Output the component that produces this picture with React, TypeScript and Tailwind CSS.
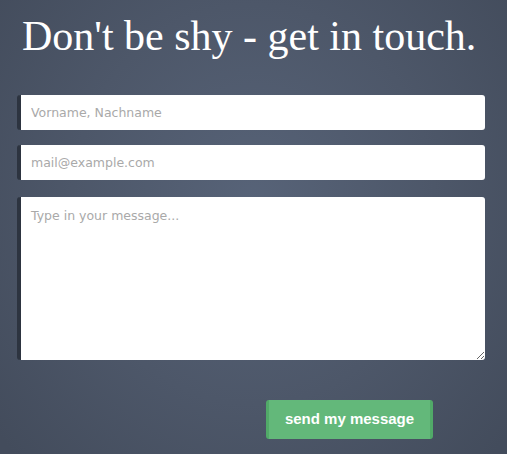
import React from "react";

export default function App() {
  return (
    <div className="w-[507px] h-[454px] overflow-hidden bg-[radial-gradient(ellipse_65%_80%_at_50%_45%,#576378_0%,#4d5769_55%,#434c5c_100%)]">
      <h1 className="pt-[13px] pl-[22px] text-[42px] leading-[46px] text-white font-normal whitespace-nowrap font-['Liberation_Serif',serif]">
        Don't be shy - get in touch.
      </h1>
      <form className="flex flex-col pl-[17px] pr-[22px] pt-[36px] font-['DejaVu_Sans','Liberation_Sans',sans-serif]" onSubmit={(e) => e.preventDefault()}>
        <input
          type="text"
          placeholder="Vorname, Nachname"
          className="h-[35px] w-[468px] bg-white border-l-[4px] border-[#2d3440] rounded-[3px] px-[10px] text-[12.5px] text-[#555] placeholder:text-[#a9a9a9] outline-none"
        />
        <input
          type="email"
          placeholder="mail@example.com"
          className="mt-[15px] h-[35px] w-[468px] bg-white border-l-[4px] border-[#2d3440] rounded-[3px] px-[10px] text-[12.5px] text-[#555] placeholder:text-[#a9a9a9] outline-none"
        />
        <textarea
          placeholder="Type in your message..."
          className="mt-[17px] h-[163px] w-[468px] bg-white border-l-[4px] border-[#2d3440] rounded-[3px] px-[10px] pt-[10px] text-[12.5px] text-[#555] placeholder:text-[#a9a9a9] outline-none resize"
        />
        <div className="pl-[249px] pt-[40px]">
          <button
            type="submit"
            className="w-[167px] h-[39px] bg-[#63b87a] border-x-[3px] border-[#51aa68] rounded-[3px] text-white text-[15px] font-bold font-['Liberation_Sans',Arial,sans-serif]"
          >
            send my message
          </button>
        </div>
      </form>
    </div>
  );
}
